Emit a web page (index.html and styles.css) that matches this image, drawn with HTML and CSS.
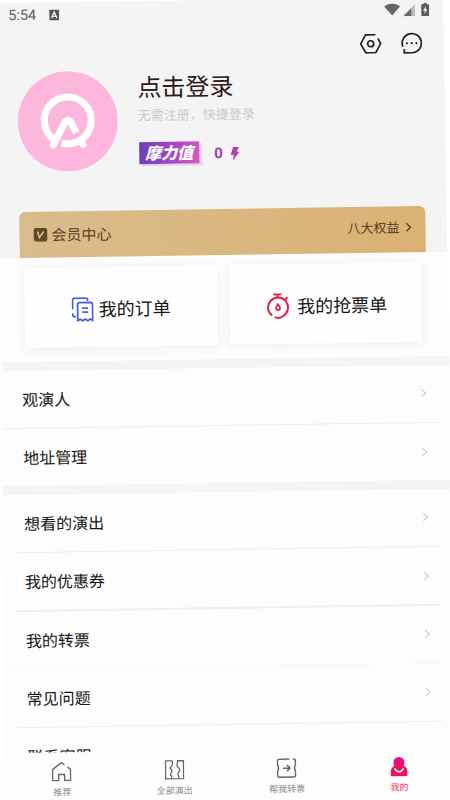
FILE: index.html
```html
<!DOCTYPE html>
<html lang="zh-CN">
<head>
<meta charset="utf-8">
<title>我的</title>
<link rel="stylesheet" href="styles.css">
</head>
<body>
<div class="screen">
  <header class="header">
    <div class="status">
      <span class="time">5:54</span>
      <svg class="keyboard" width="10" height="11" viewBox="0 0 10 11"><rect width="10" height="11" rx="1" fill="#555"/><path d="M2.3 8.5 5 2.6l2.7 5.9M3.6 6.8h2.8" fill="none" stroke="#f4f4f4" stroke-width="1.3"/></svg>
      <svg class="wifi" width="16" height="12" viewBox="0 0 16 12"><path d="M0 3Q8-3 16 3L8 12Z" fill="#666"/></svg>
      <svg class="signal" width="12" height="12" viewBox="0 0 12 12"><path d="M12 0v12H0Z" fill="#bbb"/><path d="M8 4v8H0Z" fill="#666"/></svg>
      <svg class="battery" width="8" height="13" viewBox="0 0 8 13"><path d="M2.4 0h3.2v1.3H8V13H0V1.3h2.4Z" fill="#5c5c5c"/><path d="M4.8 3 2 7.5h1.7L3.2 11 6 6.4H4.4Z" fill="#fff"/></svg>
    </div>
    <div class="tools">
      <svg width="22" height="20" viewBox="0 0 22 20" fill="none" stroke="#222" stroke-width="1.7"><path d="M16 1H6L1 10l5 9h10l5-9-2.7-5.2"/><circle cx="11" cy="10" r="3"/></svg>
      <svg width="22" height="22" viewBox="0 0 22 22" fill="none" stroke="#222" stroke-width="1.7"><path d="M2.2 14.5A9.6 9.6 0 1 1 11.5 20.6H3.5v-3.8"/><path d="M6.2 11h.1M11 11h.1M15.7 11h.1" stroke-width="2.1" stroke-linecap="round"/></svg>
    </div>
    <div class="profile">
      <svg class="avatar" width="100" height="100" viewBox="0 0 100 100"><circle cx="50" cy="50" r="50" fill="#fdb6dc"/><g fill="none" stroke="#fff" stroke-width="7" stroke-linejoin="round"><path d="M36 68A23.500 23.500 0 1 1 64 68Q56 74 43.500 72"/><path d="M35 73.500 46.500 52Q50 46 53.500 52L58.500 61.500"/><path d="M35 73.500 39 66M62 69 65 73.500" stroke-linecap="round"/></g></svg>
      <div class="who">
        <div class="login">点击登录</div>
        <div class="hint">无需注册，快捷登录</div>
        <div class="power"><span class="badge">摩力值</span><span class="count">0</span><svg width="9" height="14" viewBox="0 0 9 14"><path d="M3 0h5.8L6.5 5H9L2.5 14l1-6H.3Z" fill="#b63caf"/></svg></div>
      </div>
    </div>
    <div class="member">
      <svg width="14" height="14" viewBox="0 0 14 14"><rect width="14" height="14" rx="3.5" fill="#604a2b"/><path d="m4 3.800 1.800 6 4.400-6" fill="none" stroke="#dec096" stroke-width="1.5"/></svg>
      <span class="member-title">会员中心</span>
      <span class="member-more">八大权益</span>
      <svg width="6" height="10" viewBox="0 0 6 10"><path d="m1 1 4 4-4 4" fill="none" stroke="#59401c" stroke-width="1.3"/></svg>
    </div>
  </header>
  <section class="cards">
    <div class="card">
      <svg class="orders" width="22" height="25" viewBox="0 0 22 25" fill="none" stroke="#4b60df" stroke-width="1.8"><path d="M16 4V2.500Q16 1 14.500 1H3Q1 1 1 3v9M1 16v2q0 1.500 1.500 1.500H4"/><path d="M6 23.500V7.500q0-2 2-2H19q2 0 2 2V23.500l-2.500-1.500-2.500 1.700-2.500-1.700-2.500 1.700-2.500-1.700Z" stroke-linejoin="round"/><path d="M10.500 11h6M10.500 15h6"/></svg>
      <span>我的订单</span>
    </div>
    <div class="card">
      <svg class="watch" width="23" height="26" viewBox="0 0 23 26" fill="none" stroke="#ed1742" stroke-width="1.9"><path d="M7 1.200h8M11 1.200v3.300M18.300 7l2.700-3M5.400 22.300A10 10 0 1 1 17 22.600Q12.500 26 8 24"/><path d="M11.400 11q-2 2.500-2 3.800a2 2 0 0 0 4 0q0-1.300-2-3.800Z" stroke-width="1.7"/></svg>
      <span>我的抢票单</span>
    </div>
  </section>
  <main class="list">
    <div class="gap"></div>
    <div class="row"><span>观演人</span><i class="arrow"></i></div>
    <div class="line wide"></div>
    <div class="row"><span>地址管理</span><i class="arrow"></i></div>
    <div class="gap"></div>
    <div class="row"><span>想看的演出</span><i class="arrow"></i></div>
    <div class="line"></div>
    <div class="row"><span>我的优惠券</span><i class="arrow"></i></div>
    <div class="line"></div>
    <div class="row"><span>我的转票</span><i class="arrow"></i></div>
    <div class="line wide faint"></div>
    <div class="row"><span>常见问题</span><i class="arrow"></i></div>
    <div class="line"></div>
    <div class="row"><span>联系客服</span><i class="arrow"></i></div>
  </main>
  <nav class="tabs">
    <div class="tab"><svg width="20" height="20" viewBox="0 0 20 20" fill="none" stroke="#666" stroke-width="1.4"><path d="M13 3.500 10 1 1 8v11h6v-6h6v6h6V8l-3-2.400" stroke-linejoin="round"/></svg><span>推荐</span></div>
    <div class="tab"><svg width="20" height="20" viewBox="0 0 20 20" fill="none" stroke="#666" stroke-width="1.3" stroke-linejoin="round"><path d="M8 1H1v18h18V1h-6v3q-1.500 2.500 1.500 4.500 1.500 2-.5 4-1.500 1.500 0 3.500V19M8 1v3Q8 6 5.500 8q2.500 2 1.500 4.500Q4.500 15 7 16v3"/></svg><span>全部演出</span></div>
    <div class="tab"><svg width="20" height="20" viewBox="0 0 20 20" fill="none" stroke="#666" stroke-width="1.5"><path d="M13 1H3Q1 1 1 3v3.500q2 3.500 0 7V17q0 2 2 2h14q2 0 2-2v-3.500q-2-3.500 0-7V3q0-2-2.500-2M6.500 10h7M10.500 7l3 3-3 3"/></svg><span>帮我转票</span></div>
    <div class="tab active"><svg width="17" height="20" viewBox="0 0 17 20"><defs><linearGradient id="person" x2="0" y2="1"><stop stop-color="#e80c87"/><stop offset="1" stop-color="#f3124d"/></linearGradient></defs><path d="M3 6a5.500 5.500 0 0 1 11 0q0 2-.7 3.500Q17 12 17 15v3.500q0 1.500-1.500 1.500h-14Q0 20 0 18.500V15q0-3 3.700-5.500Q3 8 3 6Z" fill="url(#person)"/><path d="M4 12q4.500 7 9 0" fill="none" stroke="#fff" stroke-width="1.6"/></svg><span>我的</span></div>
  </nav>
</div>
</body>
</html>
```

FILE: styles.css
```css
* { box-sizing: border-box; }

body {
  margin: 0;
  height: 800px;
  overflow: hidden;
  background: #fff;
  font-family: "Noto Sans CJK SC", sans-serif;
}

.screen {
  display: flex;
  flex-direction: column;
  width: 450px;
  height: 800px;
  background: #fdfdfd;
  transform: rotate(-0.86deg);
}

svg { display: block; flex: none; }

.header {
  height: 255px;
  width: 449px;
  flex: none;
  background: #f4f4f4;
}

.status {
  display: flex;
  align-items: center;
  height: 24px;
  padding: 0 14px 0 14px;
}

.time {
  width: 40.5px;
  padding-top: 2px;
  font: 14.5px/24px Roboto, sans-serif;
  color: #606060;
}

.wifi { margin-left: auto; margin-right: 3px; }
.signal { margin-top: 1px; }
.battery { margin-left: 6px; }

.tools {
  display: flex;
  justify-content: flex-end;
  align-items: center;
  gap: 19px;
  height: 44px;
  padding-right: 21px;
}

.profile {
  display: flex;
  height: 141px;
  padding-left: 22px;
}

.avatar { margin-top: 0.5px; }
.who { padding-left: 20px; }

.login {
  font-size: 24px;
  line-height: 33px;
  color: #2e1717;
}

.hint {
  margin-top: 3px;
  font-size: 13px;
  line-height: 20px;
  color: #cbcbcb;
}

.power {
  display: flex;
  align-items: center;
  margin-top: 17px;
  height: 22px;
}

.badge {
  width: 60px;
  height: 22px;
  margin-left: 1px;
  background: linear-gradient(100deg, #6440bc, #a845c4 55%, #da5abd);
  box-shadow: 3px 2px 0 #e5d3ef;
  color: #fff;
  font-size: 16px;
  font-weight: 900;
  font-style: italic;
  line-height: 20px;
  text-align: center;
}

.count {
  width: 16px;
  margin: 2px 0 0 15px;
  font: bold 15px/22px Roboto, sans-serif;
  color: #ab3cad;
}

.power svg { margin-top: 4px; }

.member {
  display: flex;
  align-items: center;
  width: 406px;
  height: 46px;
  margin-left: 22px;
  padding: 0 14px 1px 14px;
  border-radius: 6px 6px 0 0;
  background: linear-gradient(90deg, #d9bc8b, #dbb780 50%, #d9b173);
  color: #59401c;
}

.member-title { margin: -1px 0 0 4px; font-size: 15px; }
.member-more { margin: -4px 6px 0 auto; font-size: 13px; }
.member > svg:last-child { margin-top: -3px; }

.cards {
  display: flex;
  gap: 12px;
  height: 104px;
  flex: none;
  padding: 10px 26px 15px;
}

.card {
  display: flex;
  align-items: center;
  width: 192.5px;
  height: 79.5px;
  padding-top: 3px;
  border-radius: 4px;
  background: #fefefe;
  box-shadow: 0 1px 12px rgba(0, 0, 0, 0.07);
  font-size: 18px;
  color: #161616;
}

.orders { margin: 3px 5px 0 47px; }
.watch { margin: 1px 8px 0 37px; }

.list {
  height: 391px;
  flex: none;
  overflow: hidden;
}

.gap {
  height: 8.6px;
  margin-left: 1.5px;
  background: #f4f4f4;
}

.row {
  display: flex;
  align-items: center;
  justify-content: space-between;
  height: 57.2px;
  padding: 0 25.5px 1px 22.3px;
  font-size: 16px;
  color: #161616;
}

.arrow {
  width: 6px;
  height: 6px;
  margin-top: 1px;
  border: solid #c8c8c8;
  border-width: 1.5px 1.5px 0 0;
  transform: rotate(45deg);
}

.line {
  height: 1.2px;
  margin: 0 12px;
  background: #efefef;
}

.wide { margin: 0 10px 0 2px; }
.faint { background: #f7f7f7; }

.tabs {
  display: flex;
  height: 50px;
  flex: none;
}

.tab {
  display: flex;
  flex-direction: column;
  align-items: center;
  width: 112.5px;
  padding-top: 9px;
  font-size: 9px;
  line-height: 14px;
  color: #8c8c8c;
}

.tab span { margin-top: 4px; }
.active { color: #f03a64; }
```
